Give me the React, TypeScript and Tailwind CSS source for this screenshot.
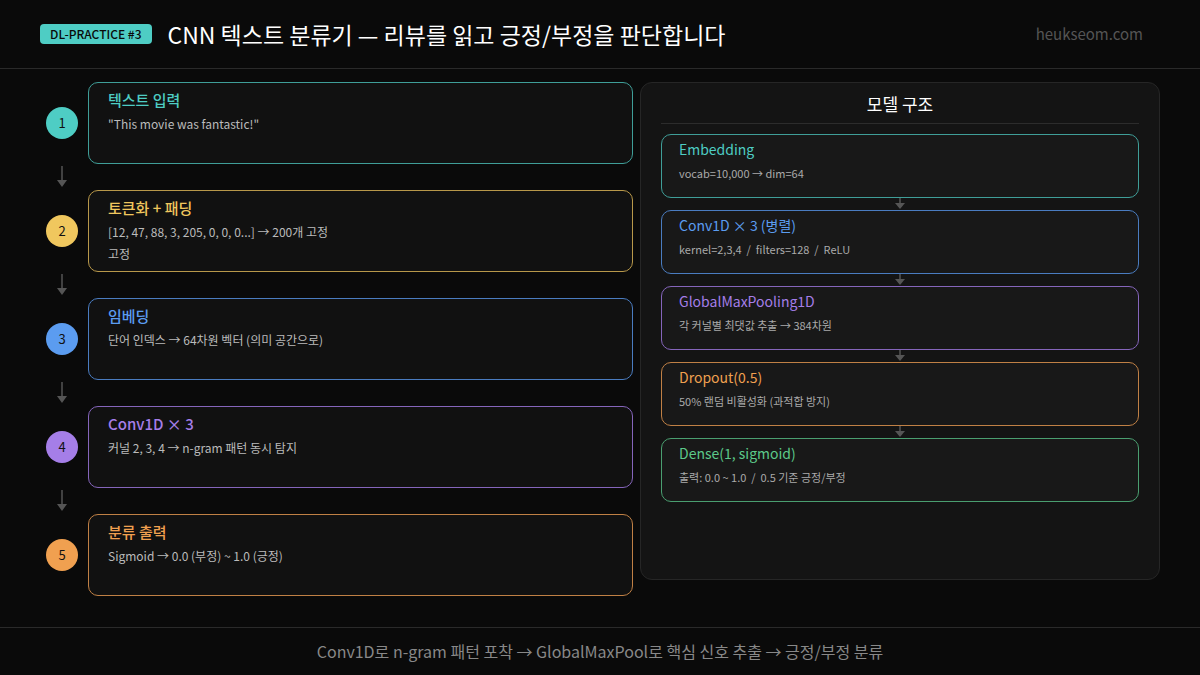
import React from "react";

const steps = [
  { n: "1", t: "텍스트 입력", d: ["\"This movie was fantastic!\""], c: "#4ecdc4", b: "#3f9e98" },
  { n: "2", t: "토큰화 + 패딩", d: ["[12, 47, 88, 3, 205, 0, 0, 0...] → 200개 고정", "고정"], c: "#f0c75e", b: "#b8984a" },
  { n: "3", t: "임베딩", d: ["단어 인덱스 → 64차원 벡터 (의미 공간으로)"], c: "#5b9cf0", b: "#4a7cc0" },
  { n: "4", t: "Conv1D × 3", d: ["커널 2, 3, 4 → n-gram 패턴 동시 탐지"], c: "#a57ee8", b: "#8565bb" },
  { n: "5", t: "분류 출력", d: ["Sigmoid → 0.0 (부정) ~ 1.0 (긍정)"], c: "#f0a050", b: "#c08045" },
];

const layers = [
  { t: "Embedding", d: "vocab=10,000 → dim=64", c: "#4ecdc4", b: "#3f9e98" },
  { t: "Conv1D × 3 (병렬)", d: "kernel=2,3,4  /  filters=128  /  ReLU", c: "#5b9cf0", b: "#4a7cc0" },
  { t: "GlobalMaxPooling1D", d: "각 커널별 최댓값 추출 → 384차원", c: "#a57ee8", b: "#8565bb" },
  { t: "Dropout(0.5)", d: "50% 랜덤 비활성화 (과적합 방지)", c: "#f0a050", b: "#c08045" },
  { t: "Dense(1, sigmoid)", d: "출력: 0.0 ~ 1.0  /  0.5 기준 긍정/부정", c: "#5cc98a", b: "#4a9e70" },
];

const font = { fontFamily: "'Noto Sans CJK KR', 'Noto Sans', sans-serif" };

export default function App() {
  return (
    <div className="w-[1200px] h-[675px] bg-[#0a0a0a] text-white flex flex-col overflow-hidden" style={font}>
      <div className="h-[69px] border-b border-[#2a2a2a] flex items-center px-10 shrink-0">
        <span className="bg-[#4ecdc4] text-[#0a0a0a] text-[12px] font-medium rounded px-2.5 py-[1px] leading-[18px]">DL-PRACTICE #3</span>
        <span className="ml-4 text-[23px] text-white">CNN 텍스트 분류기 — 리뷰를 읽고 긍정/부정을 판단합니다</span>
        <span className="ml-auto mr-[17px] text-[15px] text-[#555]">heukseom.com</span>
      </div>
      <div className="flex-1 flex pt-[13px] pl-[46px]">
        <div className="w-[587px] flex flex-col">
          {steps.map((s, i) => (
            <React.Fragment key={s.n}>
              {i > 0 && (
                <div className="h-[26px] w-[32px] flex items-center justify-center">
                  <svg width="12" height="22" viewBox="0 0 12 22"><line x1="6" y1="0" x2="6" y2="15" stroke="#555" strokeWidth="1.5"/><polygon points="1,14 11,14 6,21" fill="#555"/></svg>
                </div>
              )}
              <div className="flex items-center h-[82px]">
                <div className="w-[32px] h-[32px] rounded-full flex items-center justify-center text-[13px] text-[#111] shrink-0" style={{ background: s.c }}>{s.n}</div>
                <div className="ml-[10px] flex-1 h-full rounded-[10px] border bg-[#111] pl-[19px] pt-[6px]" style={{ borderColor: s.b }}>
                  <div className="text-[15px] font-medium" style={{ color: s.c }}>{s.t}</div>
                  {s.d.map((x) => (
                    <div key={x} className="text-[12px] text-[#bbb] leading-[20px] mt-[2px]">{x}</div>
                  ))}
                </div>
              </div>
            </React.Fragment>
          ))}
        </div>
        <div className="ml-[7px] w-[520px] h-[498px] rounded-[12px] border border-[#262626] bg-[#141414] px-[20px]">
          <div className="text-[17px] text-center pt-[8px] pb-[6px] border-b border-[#2c2c2c]">모델 구조</div>
          <div className="pt-[10px] flex flex-col">
            {layers.map((l, i) => (
              <React.Fragment key={l.t}>
                {i > 0 && (
                  <div className="h-[12px] flex justify-center items-center">
                    <svg width="10" height="12" viewBox="0 0 10 12"><line x1="5" y1="0" x2="5" y2="6" stroke="#555" strokeWidth="1.5"/><polygon points="0,5 10,5 5,11" fill="#555"/></svg>
                  </div>
                )}
                <div className="h-[64px] rounded-[10px] border bg-[#181818] pl-[17px] pt-[4px]" style={{ borderColor: l.b }}>
                  <div className="text-[14px]" style={{ color: l.c }}>{l.t}</div>
                  <div className="text-[11px] text-[#aaa] mt-[5px] whitespace-pre">{l.d}</div>
                </div>
              </React.Fragment>
            ))}
          </div>
        </div>
      </div>
      <div className="h-[48px] border-t border-[#2a2a2a] flex items-center justify-center text-[16px] text-[#888] shrink-0 pb-[2px]">
        Conv1D로 n-gram 패턴 포착 → GlobalMaxPool로 핵심 신호 추출 → 긍정/부정 분류
      </div>
    </div>
  );
}
